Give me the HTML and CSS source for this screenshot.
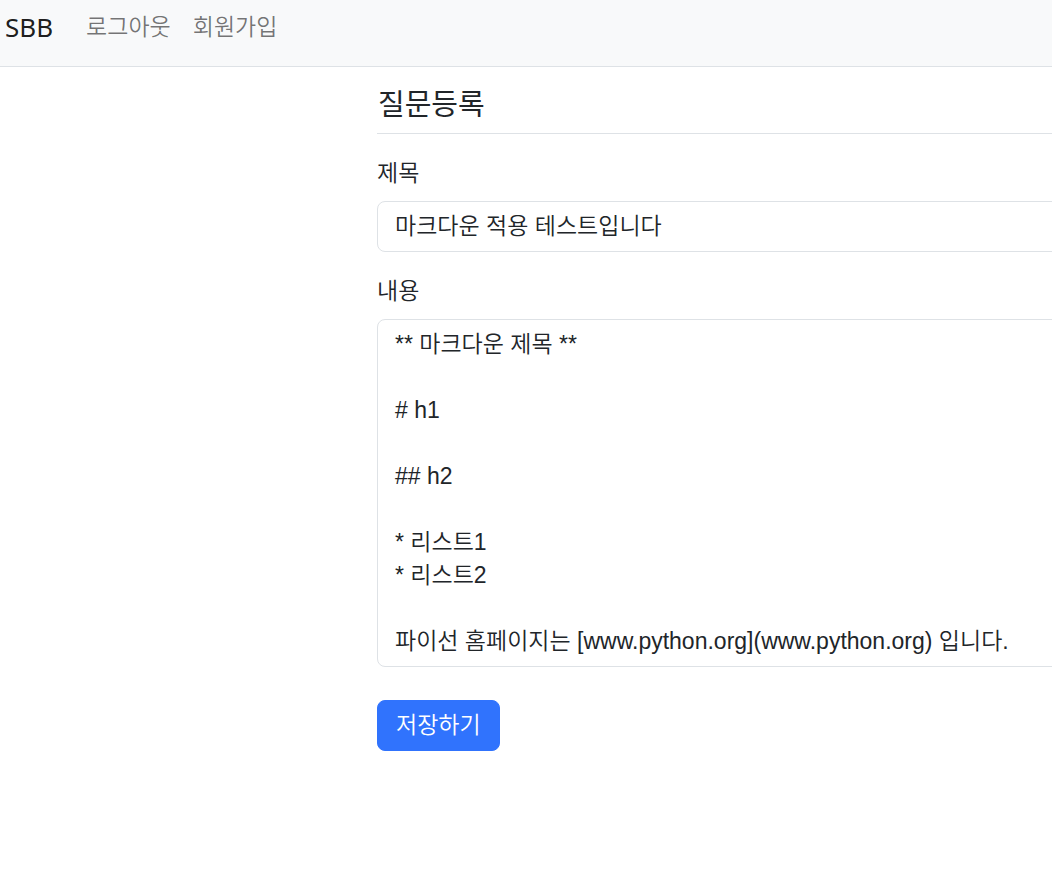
FILE: index.html
```html
<!DOCTYPE html>
<html lang="ko">
<head>
<meta charset="utf-8">
<title>SBB</title>
<link rel="stylesheet" href="styles.css">
</head>
<body>
<nav class="navbar">
  <a class="brand" href="#">SBB</a>
  <ul class="nav">
    <li><a class="nav-link" href="#">로그아웃</a></li>
    <li><a class="nav-link" href="#">회원가입</a></li>
  </ul>
</nav>
<div class="container">
  <h5 class="title">질문등록</h5>
  <form class="form">
    <div class="field">
      <label class="label" for="subject">제목</label>
      <input class="control" id="subject" type="text" value="마크다운 적용 테스트입니다">
    </div>
    <div class="field">
      <label class="label" for="content">내용</label>
      <textarea class="control area" id="content" rows="10">** 마크다운 제목 **

# h1

## h2

* 리스트1
* 리스트2

파이선 홈페이지는 [www.python.org](www.python.org) 입니다.</textarea>
    </div>
    <button class="btn" type="button">저장하기</button>
  </form>
</div>
</body>
</html>
```
FILE: styles.css
```css
* { box-sizing: border-box; }
html, body {
  margin: 0;
  padding: 0;
  background: #fff;
  overflow: hidden;
}
body {
  font-family: "Liberation Sans", "Noto Sans CJK KR", sans-serif;
  font-size: 23px;
  font-weight: 350;
  line-height: 1.5;
  color: #212529;
}
.navbar {
  display: flex;
  align-items: center;
  height: 67px;
  padding: 0 0 11px 5px;
  background: #f8f9fa;
  border-bottom: 1px solid #dee2e6;
}
.brand {
  font-family: "Noto Sans", sans-serif;
  font-size: 26px;
  font-weight: 400;
  line-height: 41px;
  padding: 7px 0;
  margin-right: 22px;
  color: rgba(0, 0, 0, 0.9);
  text-decoration: none;
}
.nav {
  display: flex;
  list-style: none;
  margin: 0;
  padding: 0;
}
.nav-link {
  display: block;
  padding: 11px;
  font-size: 23px;
  line-height: 33px;
  color: rgba(0, 0, 0, 0.55);
  text-decoration: none;
}
.container {
  width: 1300px;
  margin: 22px 0 22px 377px;
}
.title {
  margin: 0 0 22px;
  padding: 0 0 11px 1px;
  font-size: 29px;
  font-weight: 400;
  line-height: 33px;
  border-bottom: 1px solid #dee2e6;
}
.form { margin: 0; }
.field { margin-bottom: 22px; }
.field + .field { margin-bottom: 33px; }
.label {
  display: inline-block;
  margin-bottom: 11px;
  font-size: 23px;
  line-height: 33px;
}
.control {
  display: block;
  width: 100%;
  padding: 8px 17px;
  font-family: inherit;
  font-size: 23px;
  font-weight: 350;
  line-height: 33px;
  color: #212529;
  background: #fff;
  border: 1px solid #dee2e6;
  border-radius: 8px;
  outline: none;
}
.area {
  height: 348px;
  resize: none;
  overflow: hidden;
}
.btn {
  display: inline-block;
  padding: 8px 18px;
  font-family: inherit;
  font-size: 23px;
  font-weight: 350;
  line-height: 33px;
  color: #fff;
  background: #3073fd;
  border: 1px solid #3073fd;
  border-radius: 8px;
}
```
